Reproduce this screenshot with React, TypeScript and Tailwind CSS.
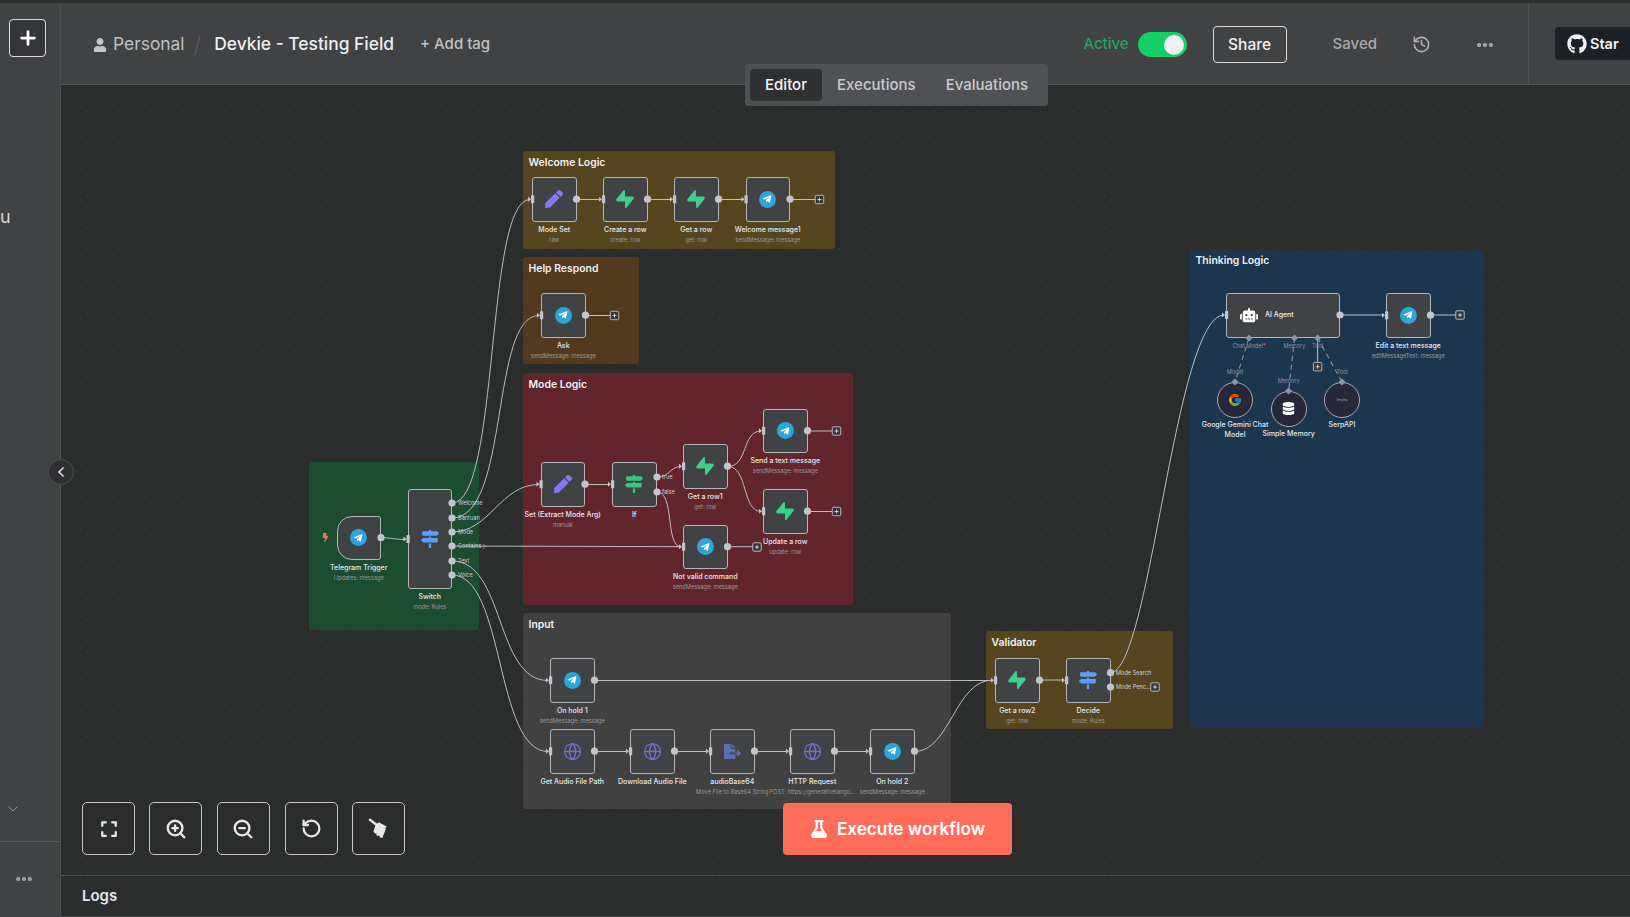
import React from "react";
import { FaPen, FaMapSigns, FaFileExport, FaRobot, FaDatabase, FaBolt, FaGithub, FaUser, FaTelegramPlane, FaFlask, FaExpand } from "react-icons/fa";
import { SiSupabase } from "react-icons/si";
import { FcGoogle } from "react-icons/fc";
import { Globe, ZoomIn, ZoomOut, RotateCcw, History, Ellipsis, Plus, ChevronLeft, ChevronDown } from "lucide-react";

type Kind = "tg" | "sb" | "pen" | "if" | "sw" | "web" | "file";
type N = { l: string; s: string; x: number; y: number; k: Kind; h?: number; trigger?: boolean };

const groups = [
  { t: "Welcome Logic", x: 523, y: 151, w: 312, h: 98, c: "bg-[#56461f]" },
  { t: "Help Respond", x: 523, y: 257, w: 116, h: 107, c: "bg-[#53391d]" },
  { t: "Mode Logic", x: 523, y: 373, w: 330, h: 232, c: "bg-[#62252b]" },
  { t: "", x: 309, y: 462, w: 170, h: 168, c: "bg-[#1c4d31]" },
  { t: "Input", x: 523, y: 613, w: 428, h: 196, c: "bg-[#414141]" },
  { t: "Validator", x: 986, y: 631, w: 187, h: 98, c: "bg-[#56461f]" },
  { t: "Thinking Logic", x: 1190, y: 249, w: 294, h: 479, c: "bg-[#1d3650]" },
];

const nodes: N[] = [
  { l: "Mode Set", s: "raw", x: 532, y: 177, k: "pen" },
  { l: "Create a row", s: "create: row", x: 603, y: 177, k: "sb" },
  { l: "Get a row", s: "get: row", x: 674, y: 177, k: "sb" },
  { l: "Welcome message1", s: "sendMessage: message", x: 745.5, y: 177, k: "tg" },
  { l: "Ask", s: "sendMessage: message", x: 541, y: 293, k: "tg" },
  { l: "Set (Extract Mode Arg)", s: "manual", x: 540.5, y: 462, k: "pen" },
  { l: "If", s: "", x: 612, y: 462, k: "if" },
  { l: "Get a row1", s: "get: row", x: 683, y: 444, k: "sb" },
  { l: "Send a text message", s: "sendMessage: message", x: 763, y: 408.5, k: "tg" },
  { l: "Update a row", s: "update: row", x: 763, y: 489, k: "sb" },
  { l: "Not valid command", s: "sendMessage: message", x: 683, y: 524.5, k: "tg" },
  { l: "Telegram Trigger", s: "Updates: message", x: 336.5, y: 515.5, k: "tg", trigger: true },
  { l: "Switch", s: "mode: Rules", x: 407.5, y: 489, k: "sw", h: 100 },
  { l: "On hold 1", s: "sendMessage: message", x: 550, y: 658, k: "tg" },
  { l: "Get Audio File Path", s: "", x: 550, y: 729, k: "web" },
  { l: "Download Audio File", s: "", x: 630, y: 729, k: "web" },
  { l: "audioBase64", s: "Move File to Base64 String", x: 710, y: 729, k: "file" },
  { l: "HTTP Request", s: "POST: https://generativelangu...", x: 790, y: 729, k: "web" },
  { l: "On hold 2", s: "sendMessage: message", x: 870, y: 729, k: "tg" },
  { l: "Get a row2", s: "get: row", x: 995, y: 658, k: "sb" },
  { l: "Decide", s: "mode: Rules", x: 1066, y: 658, k: "if" },
  { l: "Edit a text message", s: "editMessageText: message", x: 1386, y: 293, k: "tg" },
];

const wires = [
  "M452 503C500 503 485 199.5 530 199.5",
  "M452 518C510 518 490 315.5 539 315.5",
  "M452 532C490 532 500 484.5 539 484.5",
  "M452 546L681 546.7",
  "M452 561C505 561 495 680.5 548 680.5",
  "M452 575C505 575 495 751.5 548 751.5",
  "M381 537.7C392 537.7 394 539.5 406 539.5",
  "M577 199.5H601M648 199.5H672M719 199.5H743M790 199.5H815",
  "M586 315.5H610",
  "M586 484.5H610",
  "M657 477C670 477 670 466.5 681 466.5",
  "M657 492C675 492 665 546.7 681 546.7",
  "M728 466.5C748 466.5 742 431 761 431",
  "M728 466.5C748 466.5 742 511.5 761 511.5",
  "M808 431H832M808 511.5H832M728 546.7H753",
  "M594.5 680.5H993",
  "M594.5 751.5H628M674.5 751.5H708M754.5 751.5H788M834.5 751.5H868",
  "M914.5 751.5C950 751.5 955 680 993 680",
  "M1039.5 680H1064",
  "M1110.5 672.7C1150 672.7 1175 315 1224 315",
  "M1340 315H1384M1430.5 315H1456",
  "M1317.6 338V362",
];
const inputs: [number, number][] = nodes.filter((n) => !n.trigger).map((n) => [n.x, n.y + (n.h ?? 44.5) / 2]);
inputs.push([1226, 315]);
const outs: [number, number][] = [
  ...nodes.filter((n) => !["Switch", "If", "Decide"].includes(n.l)).map((n): [number, number] => [n.x + 44.5, n.y + 22.2]),
  [452, 503], [452, 518], [452, 532], [452, 546], [452, 561], [452, 575],
  [657, 477], [657, 492], [1110.5, 672.7], [1110.5, 687], [1340, 315],
];
const pluses: [number, number][] = [[819.5, 199.5], [614.5, 315.5], [836.5, 431], [836.5, 511.5], [757, 547], [1155, 687], [1460, 315], [1317.6, 366.7]];
const diamonds: [number, number][] = [[1249, 338], [1294.5, 338], [1317.6, 338], [1235, 382], [1288.6, 391], [1342, 382]];
const outLabels = [
  { t: "Welcome", x: 458, y: 503 }, { t: "Bantuan", x: 458, y: 518 }, { t: "Mode", x: 458, y: 532 },
  { t: "Contains )", x: 458, y: 546 }, { t: "Text", x: 458, y: 561 }, { t: "Voice", x: 458, y: 575 },
  { t: "true", x: 662, y: 477 }, { t: "false", x: 662, y: 492 },
  { t: "Mode Search", x: 1116, y: 672.7 }, { t: "Mode Penc...", x: 1116, y: 687 },
];
const connLabels = [
  { t: "Memory", x: 1294.5, y: 346 }, { t: "Tool", x: 1317.6, y: 346 },
  { t: "Model", x: 1235, y: 372 }, { t: "Memory", x: 1288.6, y: 381 }, { t: "Tool", x: 1342, y: 372 },
];

function Icon({ k }: { k: Kind }) {
  if (k === "tg")
    return (
      <span className="flex h-[17px] w-[17px] items-center justify-center rounded-full bg-[#2ca5dc] text-white">
        <FaTelegramPlane size={10} className="-ml-px" />
      </span>
    );
  if (k === "sb") return <SiSupabase size={18} className="text-[#3ecf8e]" />;
  if (k === "pen") return <FaPen size={18} className="text-[#8578f2]" />;
  if (k === "if") return <FaMapSigns size={18} className="text-[#35c77d]" />;
  if (k === "sw") return <FaMapSigns size={18} className="text-[#5c9cff]" />;
  if (k === "web") return <Globe size={19} strokeWidth={1.6} className="text-[#7d6fd8]" />;
  return <FaFileExport size={17} className="text-[#5a6eb0]" />;
}

function Node({ n }: { n: N }) {
  const h = n.h ?? 44.5;
  const icon = n.l === "Decide" ? "sw" : n.k;
  return (
    <div className="absolute" style={{ left: n.x, top: n.y, width: 44.5, height: h }}>
      <div className={`flex h-full w-full items-center justify-center border-[1.3px] border-[#b5b6ba] bg-[#414244] ${n.trigger ? "rounded-l-[15px] rounded-r-[3px]" : "rounded-[3px]"}`}>
        <Icon k={icon} />
      </div>
      <div className="absolute left-1/2 top-full flex -translate-x-1/2 flex-col items-center whitespace-nowrap">
        <span className="mt-[3px] text-[7px] font-medium leading-[9px] text-[#e6e8ec]">{n.l}</span>
        {n.s && <span className="mt-[2px] text-[5.7px] leading-[8px] text-[#98999c]">{n.s}</span>}
      </div>
    </div>
  );
}

function ToolBtn({ children, x }: { children: React.ReactNode; x: number }) {
  return (
    <button className="absolute top-[802px] flex h-[53px] w-[53px] items-center justify-center rounded-[5px] border border-[#c8c8c8] bg-[#2b2c2c] text-[#e8e8ea]" style={{ left: x }}>
      {children}
    </button>
  );
}

export default function App() {
  return (
    <div className="flex h-[917px] w-[1630px] flex-col overflow-hidden bg-[#2b2c2c] font-['Inter',sans-serif]">
      <div className="h-[3px] shrink-0 bg-[#2e2f2f]" />
      <div className="flex min-h-0 flex-1">
        <aside className="flex w-[61px] shrink-0 flex-col border-r border-[#4d4e50] bg-[#414244]">
          <button className="ml-[9px] mt-[16px] flex h-[38px] w-[37px] items-center justify-center rounded-[4px] border border-[#dcdcdc] bg-[#35363a] text-white">
            <Plus size={22} strokeWidth={3} />
          </button>
          <span className="mt-[149px] text-[18px] leading-[22px] text-[#d8d8da]">u</span>
          <ChevronDown size={16} strokeWidth={1.5} className="ml-[5px] mt-auto text-[#8f9094]" />
          <div className="mt-[24px] border-t border-[#57585a]" />
          <Ellipsis size={20} strokeWidth={3} className="ml-[14px] mt-[27px] mb-[28px] text-[#a8a9ad]" />
        </aside>
        <main className="relative flex min-w-0 flex-1 flex-col">
          <header className="flex h-[82px] shrink-0 items-center border-b border-[#55565a] bg-[#414244] pt-[2px]">
            <FaUser size={14} className="ml-[32px] text-[#c4c5c9]" />
            <span className="ml-[6px] text-[17.4px] text-[#bfc0c4]">Personal</span>
            <span className="ml-[9px] text-[22px] font-light leading-none text-[#5c5d60]">/</span>
            <span className="ml-[13px] text-[17.4px] font-medium text-[#eceef2]">Devkie - Testing Field</span>
            <span className="ml-[26px] text-[15px] font-medium text-[#bfc0c4]">+ Add tag</span>
            <span className="ml-auto text-[15px] font-medium text-[#2f9e63]">Active</span>
            <span className="ml-[9px] flex h-[25px] w-[49px] items-center justify-end rounded-full bg-[#14d166] pr-[3px]">
              <span className="h-[20px] w-[20px] rounded-full bg-[#eef0f4]" />
            </span>
            <button className="ml-[26px] h-[37px] w-[74px] rounded-[4px] border border-[#dcdcdc] text-[15.5px] font-medium text-[#f2f2f4]">Share</button>
            <span className="ml-[46px] text-[15px] font-medium text-[#a8a9ad]">Saved</span>
            <History size={19} strokeWidth={2} className="ml-[35px] text-[#b0b1b5]" />
            <Ellipsis size={20} strokeWidth={3} className="ml-[44px] text-[#b0b1b5]" />
            <div className="-mt-[2px] ml-[33px] h-[81px] w-px bg-[#4d4e50]" />
            <div className="-mt-[2px] ml-[26px] flex h-[33px] w-[75px] shrink-0 items-center gap-[3px] rounded-l-[4px] bg-[#1c2128] pl-[12px] text-[14.5px] font-semibold text-[#f2f2f4]">
              <FaGithub size={20} className="shrink-0" />
              <span>Star</span>
            </div>
          </header>
          <div className="relative min-h-0 flex-1 bg-[#2b2c2c] bg-[radial-gradient(#474848_0.8px,transparent_0.9px)] bg-[size:10.6px_10.6px]">
            <div className="absolute -left-[61px] -top-[85px] h-[917px] w-[1630px]">
              {groups.map((g) => (
                <div key={g.t || "trigger"} className={`absolute rounded-[3px] ${g.c}`} style={{ left: g.x, top: g.y, width: g.w, height: g.h }}>
                  <div className="pl-[5.5px] pt-[4.5px] text-[10.4px] font-semibold leading-[13px] text-[#eef0f4]">{g.t}</div>
                </div>
              ))}
              {nodes.map((n) => (
                <Node key={n.l} n={n} />
              ))}
              <div className="absolute left-[1226px] top-[293px] flex h-[44.5px] w-[114px] items-center rounded-[3px] border-[1.3px] border-[#b5b6ba] bg-[#414244] pl-[13px] text-[7px] font-medium text-[#eceef2]">
                <FaRobot size={18} className="text-white" />
                <span className="ml-[7px]">AI Agent</span>
              </div>
              {[
                { x: 1235, y: 400, l: "Google Gemini Chat", l2: "Model", i: <FcGoogle size={14} /> },
                { x: 1288.6, y: 408.7, l: "Simple Memory", l2: "", i: <FaDatabase size={13} className="text-white" /> },
                { x: 1342, y: 400, l: "SerpAPI", l2: "", i: <span className="text-[3px] text-[#a0a0a8]">SerpApi</span> },
              ].map((c) => (
                <div key={c.l} className="absolute h-[36px] w-[36px]" style={{ left: c.x - 18, top: c.y - 18 }}>
                  <div className="flex h-full w-full items-center justify-center rounded-full border-[1.3px] border-[#a6abb8] bg-[#26283a]">{c.i}</div>
                  <div className="absolute left-1/2 top-full mt-[2px] -translate-x-1/2 whitespace-nowrap text-center text-[7px] font-medium leading-[9.5px] text-[#e2e6ee]">
                    {c.l}
                    {c.l2 && <br />}
                    {c.l2}
                  </div>
                </div>
              ))}
              <svg width="1630" height="917" className="pointer-events-none absolute left-0 top-0" fill="none">
                {wires.map((d, i) => (
                  <path key={i} d={d} stroke="#bcbdc3" strokeWidth="1" />
                ))}
                <path d="M1249 338L1235 382M1294.5 338L1288.6 391M1317.6 338L1342 382" stroke="#8d93a6" strokeWidth="1.1" strokeDasharray="5 4" />
                {inputs.map(([x, y], i) => (
                  <g key={i} fill="#c4c5cb">
                    <rect x={x - 1} y={y - 4} width="3.2" height="8" rx="0.5" />
                    <path d={`M${x - 4} ${y - 2.5}L${x - 1} ${y}L${x - 4} ${y + 2.5}Z`} />
                  </g>
                ))}
                {outs.map(([x, y], i) => (
                  <circle key={i} cx={x} cy={y} r="3.6" fill="#c4c5cb" />
                ))}
                {diamonds.map(([x, y], i) => (
                  <path key={i} d={`M${x} ${y - 3.6}L${x + 3.6} ${y}L${x} ${y + 3.6}L${x - 3.6} ${y}Z`} fill="#8d93a6" />
                ))}
                {pluses.map(([x, y], i) => (
                  <g key={i}>
                    <rect x={x - 4.2} y={y - 4.2} width="8.4" height="8.4" rx="1" fill="#343539" stroke="#c4c5cb" strokeWidth="0.9" />
                    <path d={`M${x - 2} ${y}H${x + 2}M${x} ${y - 2}V${y + 2}`} stroke="#d8d9dd" strokeWidth="0.9" />
                  </g>
                ))}
              </svg>
              {outLabels.map((o) => (
                <span key={o.t + o.y} className="absolute -translate-y-1/2 whitespace-nowrap text-[5.6px] leading-[7px] text-[#cfd0d4]" style={{ left: o.x, top: o.y }}>
                  {o.t}
                </span>
              ))}
              <span className="absolute left-[1249px] top-[346px] -translate-x-1/2 -translate-y-1/2 whitespace-nowrap text-[5.6px] leading-[7px] text-[#8b91a4]">
                Chat Model<span className="text-[#ff6d5a]">*</span>
              </span>
              {connLabels.map((o) => (
                <span key={o.t + o.x} className="absolute -translate-x-1/2 -translate-y-1/2 whitespace-nowrap text-[5.6px] leading-[7px] text-[#8b91a4]" style={{ left: o.x, top: o.y }}>
                  {o.t}
                </span>
              ))}
              <FaBolt size={9} className="absolute left-[321px] top-[533px] text-[#ff6d5a]" />

              <div className="absolute left-[745px] top-[64px] flex h-[42px] w-[303px] items-center rounded-[4px] bg-[#505154] pl-[5px] text-[15px] font-medium text-[#c9cace]">
                <span className="flex h-[32px] w-[72px] items-center justify-center rounded-[4px] bg-[#2f3032] text-[#f4f4f6]">Editor</span>
                <span className="ml-[15px]">Executions</span>
                <span className="ml-[30px]">Evaluations</span>
              </div>

              <div className="absolute left-[48px] top-[459px] flex h-[26px] w-[26px] items-center justify-center rounded-full border border-[#4d4e50] bg-[#2f3032] text-[#e0e0e4]">
                <ChevronLeft size={16} strokeWidth={2.5} />
              </div>

              <ToolBtn x={82}><FaExpand size={18} /></ToolBtn>
              <ToolBtn x={149}><ZoomIn size={22} strokeWidth={2.6} /></ToolBtn>
              <ToolBtn x={216.5}><ZoomOut size={22} strokeWidth={2.6} /></ToolBtn>
              <ToolBtn x={284.5}><RotateCcw size={21} strokeWidth={2.6} /></ToolBtn>
              <ToolBtn x={352}>
                <svg width="23" height="23" viewBox="0 0 24 24" fill="currentColor">
                  <path d="M1.5 3L3 1.2l8.5 6.3-1.8 2.2z" />
                  <path d="M8.6 9.2L12.2 5.5 21 10.2l-2.4 1.2 1.2.8-4 10-2.4-1-.7-2.4-1.1 1.4-1.8-1.3.1-2.3-1.5 1-1.7-2.4z" />
                </svg>
              </ToolBtn>

              <button className="absolute left-[783px] top-[803px] flex h-[52px] w-[229px] items-center justify-center gap-[9px] rounded-[4px] bg-[#ff6d5a] text-[17.2px] font-semibold text-white">
                <FaFlask size={18} />
                Execute workflow
              </button>
            </div>
          </div>
          <footer className="relative flex h-[42px] shrink-0 items-center border-b border-t border-[#4d4e50] bg-[#2c2d2d] pl-[21px] text-[15px] font-semibold text-[#e6e8ee]">Logs</footer>
        </main>
      </div>
    </div>
  );
}
